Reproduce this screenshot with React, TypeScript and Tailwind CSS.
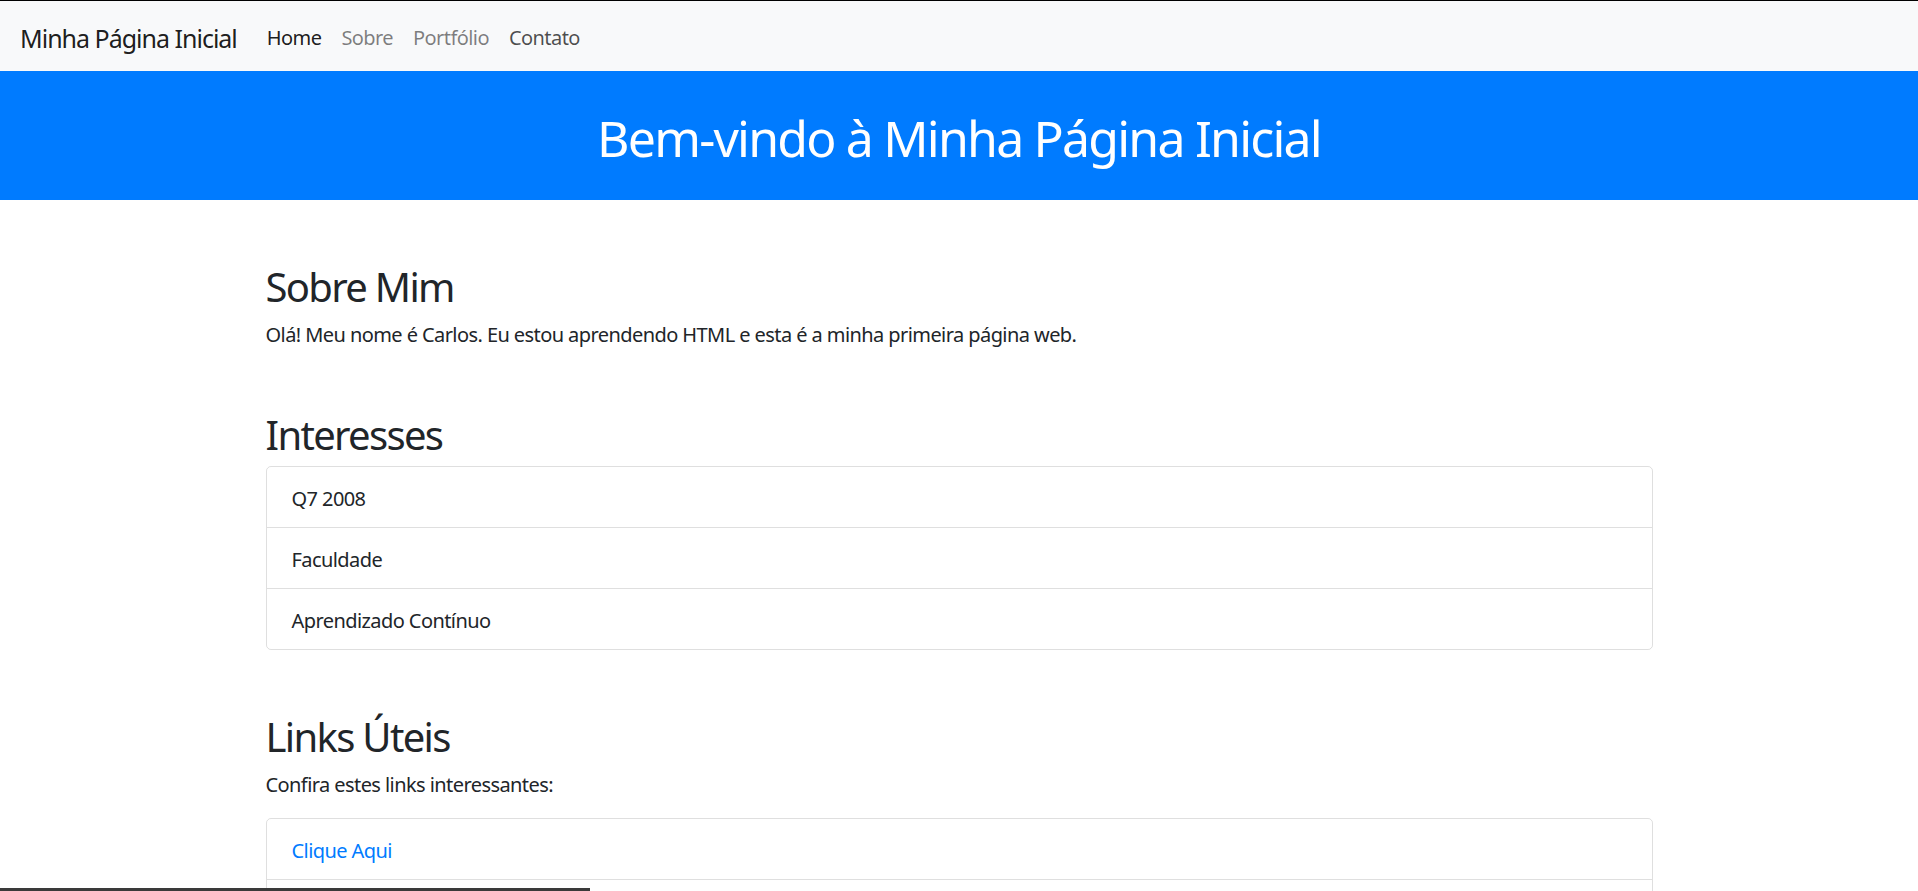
const font = "font-['Noto_Sans','Open_Sans',sans-serif] tracking-[-0.036em]";

const interesses = ["Q7 2008", "Faculdade", "Aprendizado Contínuo"];
const links = ["Clique Aqui", "Outro Link", "Mais Um Link"];

function NavLink({ label, tone }: { label: string; tone: string }) {
  return (
    <a href="#" className={`px-[10px] pb-[8px] pt-[12px] text-[20px] leading-[30px] ${tone}`}>
      {label}
    </a>
  );
}

function ListItem({ children, first }: { children: React.ReactNode; first: boolean }) {
  return (
    <li
      className={`px-[25px] pb-[13px] pt-[17px] text-[20px] leading-[30px] ${
        first ? "" : "border-t border-black/[0.125]"
      }`}
    >
      {children}
    </li>
  );
}

export default function App() {
  return (
    <div className={`min-h-screen border-t border-black bg-white text-[#212529] ${font}`}>
      <nav className="flex items-center bg-[#f8f9fa] px-[20px] py-[10px]">
        <a
          href="#"
          className="mr-[20px] pb-[4px] pt-[8.5px] text-[25px] leading-[37.5px] tracking-[-0.04em] text-black/90"
        >
          Minha Página Inicial
        </a>
        <div className="flex">
          <NavLink label="Home" tone="text-black/90" />
          <NavLink label="Sobre" tone="text-black/50" />
          <NavLink label="Portfólio" tone="text-black/50" />
          <NavLink label="Contato" tone="text-black/70" />
        </div>
      </nav>

      <header className="flex h-[129px] items-center justify-center bg-[#007bff] pt-[4px]">
        <h1 className="text-[50px] font-normal leading-[60px] tracking-[-0.036em] text-white">
          Bem-vindo à Minha Página Inicial
        </h1>
      </header>

      <main className="mx-auto mt-[60px] flex w-[1387px] flex-col gap-[60px]">
        <section>
          <h2 className="mb-[7px] pt-[3px] text-[40px] font-normal leading-[48px] tracking-[-0.042em]">
            Sobre Mim
          </h2>
          <p className="-mb-[2px] pt-[2px] text-[20px] leading-[30px]">
            Olá! Meu nome é Carlos. Eu estou aprendendo HTML e esta é a minha primeira página web.
          </p>
        </section>

        <section>
          <h2 className="mb-[7px] pt-[3px] text-[40px] font-normal leading-[48px] tracking-[-0.042em]">
            Interesses
          </h2>
          <ul className="rounded-[5px] border border-black/[0.125]">
            {interesses.map((item, i) => (
              <ListItem key={item} first={i === 0}>
                {item}
              </ListItem>
            ))}
          </ul>
        </section>

        <section>
          <h2 className="mb-[7px] pt-[3px] text-[40px] font-normal leading-[48px] tracking-[-0.042em]">
            Links Úteis
          </h2>
          <p className="mb-[18px] pt-[2px] text-[20px] leading-[30px]">Confira estes links interessantes:</p>
          <ul className="rounded-[5px] border border-black/[0.125]">
            {links.map((item, i) => (
              <ListItem key={item} first={i === 0}>
                <a href="#" className="text-[#007bff]">
                  {item}
                </a>
              </ListItem>
            ))}
          </ul>
        </section>
      </main>

      <div className="fixed bottom-0 left-0 h-[3px] w-[590px] bg-[#3a3a3a]" />
    </div>
  );
}
